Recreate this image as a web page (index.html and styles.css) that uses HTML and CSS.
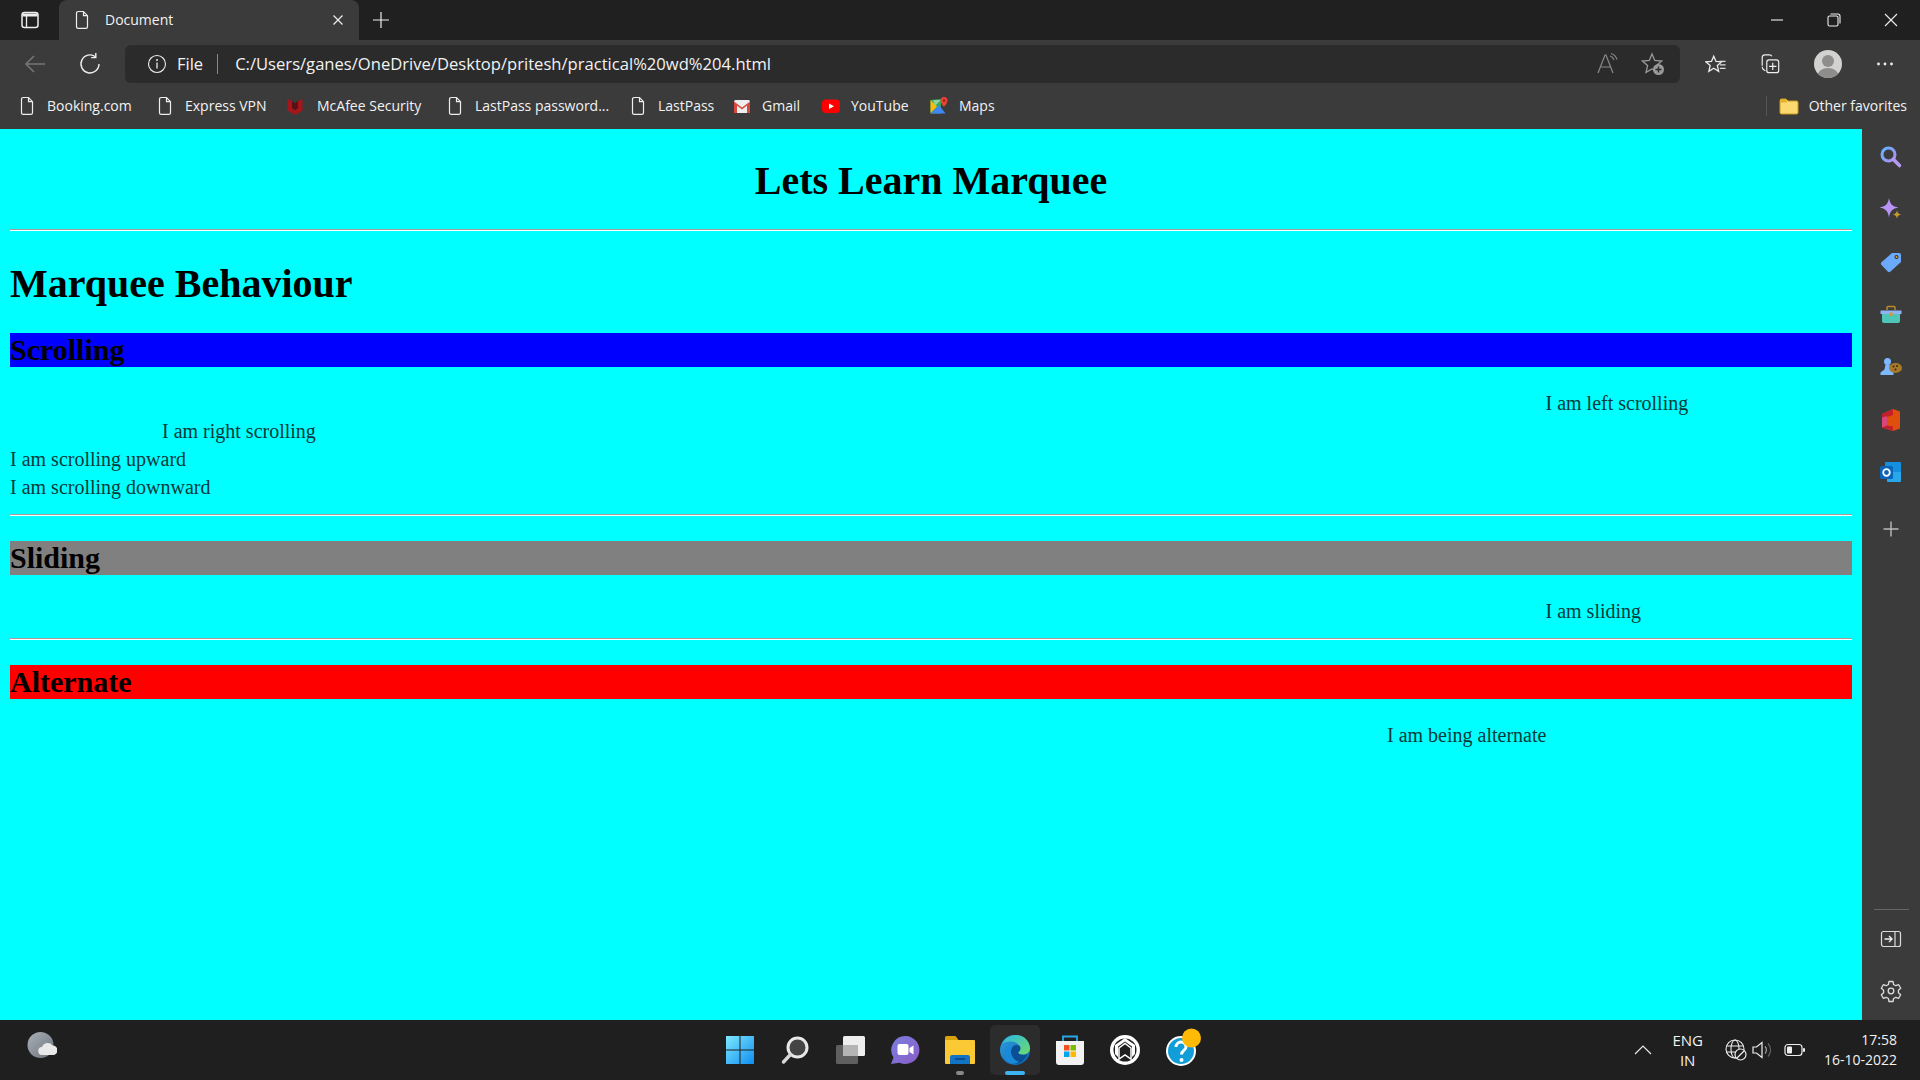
FILE: index.html
```html
<!DOCTYPE html>
<html lang="en">
<head>
<meta charset="utf-8">
<title>Document</title>
<link rel="stylesheet" href="styles.css">
</head>
<body>
<svg class="defs" width="0" height="0" aria-hidden="true">
  <symbol id="doc" viewBox="0 0 20 20"><path d="M4.500 3.200a1.700 1.700 0 0 1 1.700-1.700h5.300l4 4.200v11a1.700 1.700 0 0 1-1.700 1.700H6.200a1.700 1.700 0 0 1-1.700-1.700z M11.500 1.500v4.200h4" fill="none" stroke="#eee" stroke-width="1.200"/></symbol>
</svg>
<div class="window">
  <header class="tabstrip">
    <div class="win-menu">
      <svg width="20" height="20" viewBox="0 0 20 20"><rect x="2" y="2.500" width="16" height="15" rx="2.500" fill="none" stroke="#eee" stroke-width="1.500"/><path d="M2.500 3.500h15v3h-15z" fill="#eee"/><path d="M6.500 6v11" stroke="#eee" stroke-width="1.300"/></svg>
    </div>
    <div class="tab">
      <svg class="ico20" width="20" height="20"><use href="#doc"/></svg>
      <span class="tab-title">Document</span>
      <svg class="tab-close" width="12" height="12" viewBox="0 0 12 12"><path d="M1.500 1.500l9 9M10.500 1.500l-9 9" stroke="#eee" stroke-width="1.200"/></svg>
    </div>
    <div class="newtab">
      <svg width="18" height="18" viewBox="0 0 18 18"><path d="M9 1v16M1 9h16" stroke="#eee" stroke-width="1.200"/></svg>
    </div>
    <div class="spacer"></div>
    <div class="winbtn"><svg width="14" height="14" viewBox="0 0 14 14"><path d="M1 7h12" stroke="#eee" stroke-width="1.100"/></svg></div>
    <div class="winbtn"><svg width="14" height="14" viewBox="0 0 14 14"><rect x="1" y="3" width="10" height="10" rx="1.500" fill="none" stroke="#eee" stroke-width="1.100"/><path d="M3.500 1h7.300a2.200 2.200 0 0 1 2.200 2.200v7.300" fill="none" stroke="#eee" stroke-width="1.100"/></svg></div>
    <div class="winbtn"><svg width="14" height="14" viewBox="0 0 14 14"><path d="M1 1l12 12M13 1L1 13" stroke="#eee" stroke-width="1.100"/></svg></div>
  </header>

  <nav class="toolbar">
    <div class="navbtn">
      <svg width="24" height="24" viewBox="0 0 24 24"><path d="M22 12H3M11 4l-8 8 8 8" fill="none" stroke="#777" stroke-width="1.500"/></svg>
    </div>
    <div class="navbtn">
      <svg width="24" height="24" viewBox="0 0 24 24"><path d="M17.500 4.800A9 9 0 1 0 21 12" fill="none" stroke="#eee" stroke-width="1.400"/><path d="M17.800 1v4.600h-4.600" fill="none" stroke="#eee" stroke-width="1.400"/></svg>
    </div>
    <div class="address">
      <svg class="info" width="20" height="20" viewBox="0 0 20 20"><circle cx="10" cy="10" r="8.500" fill="none" stroke="#eee" stroke-width="1.100"/><path d="M10 8.500v6" stroke="#eee" stroke-width="1.300"/><circle cx="10" cy="6" r="1" fill="#eee"/></svg>
      <span class="addr-file">File</span>
      <span class="addr-sep"></span>
      <span class="addr-url">C:/Users/ganes/OneDrive/Desktop/pritesh/practical%20wd%204.html</span>
      <div class="spacer"></div>
      <svg class="addr-ico" width="24" height="24" viewBox="0 0 24 24"><path d="M2 21L9 3h1l7 18M5 15h10" fill="none" stroke="#8a8a8a" stroke-width="1.200"/><path d="M14 4a6 6 0 0 1 4 4M15 1.500a9 9 0 0 1 6 6" fill="none" stroke="#8a8a8a" stroke-width="1.100"/></svg>
      <svg class="addr-ico addr-fav" width="24" height="24" viewBox="0 0 24 24"><path d="M11 2l2.800 6.400 7 .6-5.300 4.600 1.500 6.800L11 17l-6 3.400 1.600-6.800L1.300 9l7-.6z" fill="none" stroke="#9a9a9a" stroke-width="1.300"/><circle cx="17.500" cy="17.500" r="5.500" fill="#9a9a9a"/><path d="M17.500 14.500v6M14.500 17.500h6" stroke="#2b2b2b" stroke-width="1.400"/></svg>
    </div>
    <div class="toolbtn toolbtn-first">
      <svg width="21" height="21" viewBox="0 0 24 24"><path d="M10 2.500l2.600 6 6.400.5-4.900 4.200 1.500 6.500L10 16.200l-5.600 3.500 1.500-6.500L1 9l6.400-.5z" fill="none" stroke="#eee" stroke-width="1.500"/><path d="M16.500 8.500h7M17 12.500h6.500M17 16.500h6.500" stroke="#ddd" stroke-width="1.300"/></svg>
    </div>
    <div class="toolbtn toolbtn-coll">
      <svg width="22" height="22" viewBox="0 0 24 24"><path d="M3.500 14V5a3 3 0 0 1 3-3h5a3 3 0 0 1 2.600 1.500M7 19.500l-1.500-1A4 4 0 0 1 3.500 15" fill="none" stroke="#eee" stroke-width="1.300"/><rect x="8.500" y="7.500" width="13" height="14" rx="2.500" fill="#3b3b3b" stroke="#eee" stroke-width="1.300"/><path d="M15 10.500v8M11 14.500h8" stroke="#eee" stroke-width="1.300"/></svg>
    </div>
    <div class="toolbtn">
      <svg width="28" height="28" viewBox="0 0 28 28"><defs><clipPath id="av"><circle cx="14" cy="14" r="14"/></clipPath></defs><circle cx="14" cy="14" r="14" fill="#d2d2d0"/><g clip-path="url(#av)" fill="#8f8d8b"><circle cx="14" cy="11" r="6"/><ellipse cx="14" cy="26" rx="10.500" ry="8"/></g></svg>
    </div>
    <div class="toolbtn">
      <svg width="18" height="6" viewBox="0 0 18 6"><circle cx="2.500" cy="3" r="1.400" fill="#eee"/><circle cx="9" cy="3" r="1.400" fill="#eee"/><circle cx="15.500" cy="3" r="1.400" fill="#eee"/></svg>
    </div>
  </nav>

  <div class="bookmarks">
    <a class="bm w138"><svg class="ico20" width="20" height="20"><use href="#doc"/></svg><span>Booking.com</span></a>
    <a class="bm w130"><svg class="ico20" width="20" height="20"><use href="#doc"/></svg><span>Express VPN</span></a>
    <a class="bm bm-wide w160"><svg class="ico20" width="20" height="20" viewBox="0 0 20 20"><path d="M2.500 3l4.500 2v7l3 2 3-2V5l4.500-2v11.500L10 19l-7.500-4.500z" fill="#a4161c"/><path d="M7 5l3 2.500L13 5v7l-3 2-3-2z" fill="#5a1014"/></svg><span>McAfee Security</span></a>
    <a class="bm w183"><svg class="ico20" width="20" height="20"><use href="#doc"/></svg><span>LastPass password...</span></a>
    <a class="bm w104"><svg class="ico20" width="20" height="20"><use href="#doc"/></svg><span>LastPass</span></a>
    <a class="bm w89"><svg class="ico20" width="20" height="20" viewBox="0 0 20 20"><rect x="2" y="4" width="16" height="13" rx="1.500" fill="#eee"/><path d="M2 5.500L10 11.500 18 5.500V6.500 17h-3V9.500L10 13.500 5 9.500V17H2z" fill="#d9483b"/></svg><span>Gmail</span></a>
    <a class="bm w108"><svg class="ico20" width="20" height="20" viewBox="0 0 20 20"><rect x="1" y="3.500" width="18" height="13.500" rx="4" fill="#f00"/><path d="M8 7.500l5 2.800-5 2.800z" fill="#fff"/></svg><span>YouTube</span></a>
    <a class="bm"><svg class="ico20" width="20" height="20" viewBox="0 0 20 20"><path d="M1.500 4L12 3v14.500H1.500z" fill="#34a853"/><path d="M1.500 17.500L10 9l6.500 8.500z" fill="#4285f4"/><path d="M1.500 4L8 10.500 1.500 17z" fill="#fbbc04"/><path d="M4 4h8L6 10z" fill="#8fd0a0"/><path d="M15 1a3.500 3.500 0 0 1 3.500 3.500C18.500 7 15 11 15 11s-3.500-4-3.500-6.500A3.500 3.500 0 0 1 15 1z" fill="#ea4335"/><circle cx="15" cy="4.500" r="1.200" fill="#8a1f16"/></svg><span>Maps</span></a>
    <div class="spacer"></div>
    <span class="bm-sep"></span>
    <a class="bm bm-other"><svg class="ico20" width="20" height="20" viewBox="0 0 20 20"><path d="M1 4.500a1.500 1.500 0 0 1 1.500-1.500h4.500l2 2h8.500a1.500 1.500 0 0 1 1.500 1.500v10a1.500 1.500 0 0 1-1.500 1.500h-15A1.500 1.500 0 0 1 1 16.500z" fill="#fbd970" stroke="#c99a1d" stroke-width="1"/><path d="M1 6.500h7L7 3H2.500A1.500 1.500 0 0 0 1 4.500z" fill="#e5b22c"/></svg><span>Other favorites</span></a>
  </div>

  <div class="main">
    <main class="page">
      <h1 class="title">Lets Learn Marquee</h1>
      <hr class="rule">
      <h1 class="heading">Marquee Behaviour</h1>
      <h2 class="band band-blue">Scrolling</h2>
      <div class="row row-first"><span class="off-left">I am left scrolling</span></div>
      <div class="row"><span class="off-right">I am right scrolling</span></div>
      <div class="row">I am scrolling upward</div>
      <div class="row">I am scrolling downward</div>
      <hr class="rule rule-after">
      <h2 class="band band-gray">Sliding</h2>
      <div class="row row-first"><span class="off-left">I am sliding</span></div>
      <hr class="rule rule-after">
      <h2 class="band band-red">Alternate</h2>
      <div class="row row-first"><span class="off-alt">I am being alternate</span></div>
    </main>
    <aside class="sidebar">
      <svg class="side" width="24" height="24" viewBox="0 0 24 24"><defs><linearGradient id="gs" x1="0" y1="0" x2="1" y2="1"><stop offset="0" stop-color="#62b4ff"/><stop offset="1" stop-color="#b08cf0"/></linearGradient></defs><circle cx="9.500" cy="9.500" r="6.500" fill="none" stroke="url(#gs)" stroke-width="3"/><path d="M14.500 14.500L20.500 20.500" stroke="#b49af0" stroke-width="3.600" stroke-linecap="round"/></svg>
      <svg class="side" width="24" height="24" viewBox="0 0 24 24"><path d="M10 0c1 6 3.500 8.500 9.500 9.500C13.500 10.500 11 13 10 19.500 9 13 6.500 10.500.5 9.500 6.500 8.500 9 6 10 0z" fill="#b794f6"/><path d="M18 12c.4 3 1.200 3.800 4.500 4.500-3.300.7-4.100 1.500-4.500 4.500-.4-3-1.200-3.800-4.500-4.500 3.300-.7 4.100-1.500 4.500-4.500z" fill="#c9982b"/></svg>
      <svg class="side" width="24" height="24" viewBox="0 0 24 24"><path d="M13 3h7a2 2 0 0 1 2 2v7L11.500 21.500a2 2 0 0 1-2.800 0L2.500 15a2 2 0 0 1 0-2.800z" fill="#6aa9fb"/><circle cx="17.500" cy="7" r="2" fill="#3a2f12"/><circle cx="17.500" cy="7" r="1" fill="#e0a82e"/></svg>
      <svg class="side" width="24" height="24" viewBox="0 0 24 24"><path d="M8 7V4.500A1 1 0 0 1 9 3.500h6a1 1 0 0 1 1 1V7" fill="none" stroke="#b8892b" stroke-width="1.500"/><path d="M3 10h18v8a2 2 0 0 1-2 2H5a2 2 0 0 1-2-2z" fill="#4fc7b8"/><path d="M1.500 7.500h21V11h-21z" fill="#8fb4f5"/><rect x="10.500" y="9.500" width="3" height="3.500" fill="#d8982b"/></svg>
      <svg class="side" width="24" height="24" viewBox="0 0 24 24"><circle cx="8.500" cy="6.500" r="3.500" fill="#7cb9ff"/><path d="M6.500 9.500h4l1 5 3 3v2.500H1.500v-2.500l4-3z" fill="#7cb9ff"/><ellipse cx="16.500" cy="13" rx="6.500" ry="5" fill="#a8792a"/><circle cx="14.500" cy="11.500" r="1" fill="#3a2a10"/><circle cx="18" cy="11" r="1" fill="#3a2a10"/><circle cx="16.500" cy="14.500" r="1" fill="#3a2a10"/></svg>
      <svg class="side" width="24" height="24" viewBox="0 0 24 24"><path d="M14 1l7 2.500v17L14 23 3 19.500V6z" fill="#e04e0e"/><path d="M14 1v6l-6 2v8.500l6 1V23L3 19.500V6z" fill="#c4202c"/><path d="M3 9.500L8 8v9.500l-5 2z" fill="#d9467a"/></svg>
      <svg class="side" width="24" height="24" viewBox="0 0 24 24"><rect x="6" y="2" width="16" height="11" rx="1" fill="#1490df"/><path d="M8 12h14v9a1 1 0 0 1-1 1H9a1 1 0 0 1-1-1z" fill="#28a8ea"/><rect x="1" y="6" width="13" height="13" rx="1.500" fill="#0a64b8"/><circle cx="7.500" cy="12.500" r="3.300" fill="none" stroke="#fff" stroke-width="1.800"/></svg>
      <svg class="side side-plus" width="24" height="24" viewBox="0 0 24 24"><path d="M12 4.500v15M4.500 12h15" stroke="#bbb" stroke-width="1.400"/></svg>
      <div class="spacer"></div>
      <span class="side-sep"></span>
      <svg class="side side-dock" width="24" height="24" viewBox="0 0 24 24"><rect x="2.500" y="4.500" width="19" height="15" rx="2" fill="none" stroke="#ddd" stroke-width="1.200"/><path d="M16 4.500v15" stroke="#ddd" stroke-width="1.200"/><path d="M5.500 12H13M10 9l3 3-3 3" fill="none" stroke="#eee" stroke-width="1.400"/></svg>
      <svg class="side side-gear" width="24" height="24" viewBox="0 0 24 24"><path d="M10 2.500h4l.6 3 2.200 1.200 2.900-1 2 3.500-2.300 2 0 2.600 2.300 2-2 3.500-2.900-1-2.200 1.200-.6 3h-4l-.6-3-2.200-1.200-2.900 1-2-3.500 2.300-2 0-2.600-2.300-2 2-3.500 2.900 1 2.200-1.200z" fill="none" stroke="#ddd" stroke-width="1.300" stroke-linejoin="round"/><circle cx="12" cy="12" r="2.800" fill="none" stroke="#ddd" stroke-width="1.300"/></svg>
    </aside>
  </div>

  <footer class="taskbar">
    <div class="tb-left">
      <svg width="30" height="26" viewBox="0 0 30 26"><defs><linearGradient id="moon" x1="0" y1="0" x2="1" y2="1"><stop offset="0" stop-color="#a9b0b8"/><stop offset="1" stop-color="#6e747b"/></linearGradient></defs><circle cx="13.500" cy="13" r="13" fill="url(#moon)"/><path d="M15.500 23a4 4 0 0 1-.5-8 6 6 0 0 1 10.500-1.500 4.500 4.500 0 0 1 .5 9.500z" fill="#e9e9e9"/></svg>
    </div>
    <div class="tb-center">
      <div class="tb-item"><svg width="30" height="30" viewBox="0 0 30 30"><defs><linearGradient id="w11" x1="0" y1="0" x2="1" y2="1"><stop offset="0" stop-color="#7fe8ff"/><stop offset="1" stop-color="#0f8ef0"/></linearGradient></defs><path d="M1 1h13.500v13.500H1zM15.500 1H29v13.500H15.500zM1 15.500h13.500V29H1zM15.500 15.500H29V29H15.500z" fill="url(#w11)"/></svg></div>
      <div class="tb-item"><svg width="30" height="30" viewBox="0 0 30 30"><circle cx="17.500" cy="12.500" r="9.500" fill="#444" stroke="#e8e8e8" stroke-width="3"/><path d="M10.500 19.500L3.500 27" stroke="#d8d8d8" stroke-width="3.400" stroke-linecap="round"/></svg></div>
      <div class="tb-item"><svg width="30" height="30" viewBox="0 0 30 30"><rect x="1" y="10" width="22" height="19" rx="1.500" fill="#5f5f5f"/><rect x="8" y="1" width="22" height="20" rx="1.500" fill="#eee"/><rect x="8" y="10" width="15" height="11" fill="#b4b4b4"/></svg></div>
      <div class="tb-item"><svg width="30" height="30" viewBox="0 0 30 30"><defs><linearGradient id="teams" x1="0" y1="0" x2="1" y2="1"><stop offset="0" stop-color="#7b7fe0"/><stop offset="1" stop-color="#8a5cc6"/></linearGradient></defs><path d="M15.500 1a14 14 0 1 1-6 26.700L1 29l2.500-6.500A14 14 0 0 1 15.500 1z" fill="url(#teams)"/><rect x="7.500" y="9" width="11" height="11" rx="2" fill="#fff"/><path d="M19.500 13l4-2.500v9l-4-2.500z" fill="#fff"/></svg></div>
      <div class="tb-item"><svg width="32" height="30" viewBox="0 0 32 30"><path d="M1 2.500A1.500 1.500 0 0 1 2.500 1h9l3 4H1z" fill="#d9a20c"/><path d="M1 5h29a1 1 0 0 1 1 1v22a1 1 0 0 1-1 1H2a1 1 0 0 1-1-1z" fill="#fbc934"/><path d="M6 22a2 2 0 0 1 2-2h16a2 2 0 0 1 2 2v7H6z" fill="#1273c4"/><path d="M11 24h10" stroke="#0a3f78" stroke-width="1.500"/></svg><span class="tb-dot"></span></div>
      <div class="tb-item tb-active"><svg width="32" height="32" viewBox="0 0 32 32"><defs><linearGradient id="e1" x1="0" y1="0" x2="1" y2="1"><stop offset="0" stop-color="#2f9fe0"/><stop offset="1" stop-color="#0b62b0"/></linearGradient><linearGradient id="e2" x1="0" y1="0" x2="1" y2="1"><stop offset="0" stop-color="#2ab6e8"/><stop offset="1" stop-color="#6fdc6a"/></linearGradient></defs><circle cx="16" cy="16" r="15" fill="url(#e1)"/><path d="M3 10C6 3 12 1 17 1c8 0 14 6 14 13.500 0 3.500-3 6-7 6-3 0-5-1-5-2 1-1 2-2 2-4 0-4-4-7-9-7-4 0-8 1-9 2.500z" fill="url(#e2)"/><path d="M12 17c0-4 3-6 6-6 2.500 0 3.500 1.500 3.500 3.500 0 2-1.500 3-2.500 4 1 2.500 5 3 9 2-2 6-7 9.500-12 9.500-3 0-6-1-8-3 2 0 4-4 4-10z" fill="#0a4f95"/><path d="M12 17c0 5 3 9 8 11-3 2-7 2.500-9.500 1C7 27 5 23 6 18c1-4 4-6 8-6-1 1-2 3-2 5z" fill="#1a8ad8"/></svg><span class="tb-bar"></span></div>
      <div class="tb-item"><svg width="30" height="32" viewBox="0 0 30 32"><path d="M8 7V2.500h14V7" fill="none" stroke="#29a8e8" stroke-width="1.800"/><path d="M1 7h28v21a3 3 0 0 1-3 3H4a3 3 0 0 1-3-3z" fill="#f2f2f2"/><rect x="9" y="11" width="5.500" height="5.500" fill="#f25022"/><rect x="15.500" y="11" width="5.500" height="5.500" fill="#7fba00"/><rect x="9" y="17.500" width="5.500" height="5.500" fill="#00a4ef"/><rect x="15.500" y="17.500" width="5.500" height="5.500" fill="#ffb900"/></svg></div>
      <div class="tb-item"><svg width="30" height="30" viewBox="0 0 30 30"><circle cx="15" cy="15" r="15" fill="#fff"/><circle cx="15" cy="15" r="11.500" fill="#1f1f1f"/><path d="M15 3L25 10v9l-3 3V11.500L15 6.500l-7 5V22l-3-3v-9z" fill="#fff"/><path d="M9 13l6-4.500 6 4.500v11l-6-4-6 4z" fill="#1f1f1f" stroke="#fff" stroke-width="1.500"/></svg></div>
      <div class="tb-item"><svg class="help" width="42" height="38" viewBox="0 0 42 38"><circle cx="22" cy="23" r="15" fill="#fff"/><circle cx="22" cy="23" r="13" fill="#119ed8"/><path d="M17 19a5 5 0 0 1 10 0c0 3.500-4.500 3.500-4.500 7.500" fill="none" stroke="#fff" stroke-width="3"/><circle cx="22.500" cy="32" r="2" fill="#fff"/><circle cx="32.500" cy="10" r="9.500" fill="#ffba08"/></svg></div>
    </div>
    <div class="tb-right">
      <svg class="tray-chev" width="20" height="12" viewBox="0 0 20 12"><path d="M2 10l8-8 8 8" fill="none" stroke="#e8e8e8" stroke-width="1.200"/></svg>
      <div class="tray-lang"><span>ENG</span><span>IN</span></div>
      <svg class="tray-globe" width="22" height="22" viewBox="0 0 22 22"><circle cx="10" cy="10" r="9" fill="none" stroke="#eee" stroke-width="1.100"/><ellipse cx="10" cy="10" rx="4" ry="9" fill="none" stroke="#eee" stroke-width="1.100"/><path d="M1.500 7h17M1.500 13h17" stroke="#eee" stroke-width="1.100"/><circle cx="15.500" cy="15.500" r="5.500" fill="#1f1f1f" stroke="#eee" stroke-width="1.200"/><path d="M12 19l7-7" stroke="#eee" stroke-width="1.200"/></svg>
      <svg class="tray-vol" width="22" height="20" viewBox="0 0 22 20"><path d="M1 7h3.500L10 2.500v15L4.500 13H1z" fill="none" stroke="#eee" stroke-width="1.200"/><path d="M13 6.500a5 5 0 0 1 0 7" fill="none" stroke="#aaa" stroke-width="1.100"/><path d="M16 3.500a9.500 9.500 0 0 1 0 13" fill="none" stroke="#666" stroke-width="1.100"/></svg>
      <svg class="tray-bat" width="22" height="14" viewBox="0 0 22 14"><rect x="1" y="1.500" width="17" height="11" rx="3" fill="none" stroke="#eee" stroke-width="1.200"/><rect x="3" y="3.500" width="5" height="7" rx="1" fill="#eee"/><rect x="19" y="5" width="2" height="4" rx="1" fill="#eee"/></svg>
      <div class="tray-clock"><span>17:58</span><span>16-10-2022</span></div>
    </div>
  </footer>
</div>
</body>
</html>
```
FILE: styles.css
```css
* { box-sizing: border-box; }
html, body { margin: 0; padding: 0; height: 100%; overflow: hidden; }
body { font-family: "Open Sans", "Noto Sans", sans-serif; color: #f2f2f2; background: #202020; }
.defs { position: absolute; }
svg { display: block; flex: none; }
.spacer { flex: 1; }
.window { width: 1920px; height: 1080px; display: flex; flex-direction: column; }

.tabstrip { height: 40px; background: #202020; display: flex; align-items: center; }
.win-menu { width: 59px; display: flex; justify-content: center; }
.tab { width: 300px; height: 40px; background: #3b3b3b; border-radius: 8px 8px 0 0; display: flex; align-items: center; padding: 0 15px 0 13px; }
.tab-title { margin: 0 0 2px 13px; font-size: 14px; flex: 1; }
.newtab { width: 44px; display: flex; justify-content: center; }
.winbtn { width: 57px; display: flex; justify-content: center; }
.winbtn:last-child { width: 58px; }

.toolbar { height: 44px; background: #3b3b3b; display: flex; align-items: center; padding: 5px 7px 1px 7px; }
.navbtn { width: 55px; display: flex; justify-content: center; }
.address { width: 1555px; margin-left: 8px; height: 38px; background: #2b2b2b; border-radius: 6px; display: flex; align-items: center; padding: 0 15px 0 22px; }
.addr-file { margin: 0 0 2px 10px; font-size: 16.5px; }
.addr-sep { width: 1px; height: 20px; background: #888; margin: 0 17px 0 14px; }
.addr-url { font-size: 16.6px; margin-bottom: 2px; }
.addr-fav { margin-left: 21px; }
.toolbtn { width: 56.500px; display: flex; justify-content: center; }
.toolbtn-first { margin-left: 7px; }
.toolbtn-coll { margin-left: -2px; margin-right: 2px; }

.bookmarks { height: 45px; background: #3b3b3b; display: flex; align-items: center; padding: 0 13px 2px 17px; font-size: 14px; }
.bm { display: flex; align-items: center; gap: 10px; }
.bm-wide { gap: 12px; }
.w138 { width: 138px; }
.w130 { width: 130px; }
.w160 { width: 160px; }
.w183 { width: 183px; }
.w104 { width: 104px; }
.w89 { width: 89px; }
.w108 { width: 108px; }
.bm-sep { width: 1px; height: 20px; background: #555; margin-right: 12px; }

.main { height: 891px; display: flex; }
.page { width: 1862px; background: #0ff; padding: 0 10px; color: #000; font-family: "Liberation Serif", serif; font-size: 20px; }
.title { margin: 29px 0 25px; font-size: 40px; line-height: 46px; text-align: center; }
.heading { margin: 30px 0 26px; font-size: 40px; line-height: 46px; }
.rule { margin: 0; height: 2px; border: 0; background: #a89a9a; border-bottom: 1px solid #fff; }
.rule-after { margin: 10px 0 25px; }
.band { margin: 0; height: 34px; font-size: 30px; line-height: 34px; }
.band-blue { background: #00f; }
.band-gray { background: #808080; }
.band-red { background: #f00; }
.row { height: 28px; line-height: 23px; color: #063a3a; }
.row-first { margin-top: 25px; }
.off-left { margin-left: 1535.500px; }
.off-right { margin-left: 152px; }
.off-alt { margin-left: 1377px; }

.sidebar { width: 58px; background: #3b3b3b; display: flex; flex-direction: column; align-items: center; padding: 16px 0 17px; gap: 28.500px; }
.side-plus { margin-top: 4px; }
.side-sep { width: 35px; height: 1px; background: #666; margin: 2px 0 -12px; }

.taskbar { height: 60px; background: #1f1f1f; display: grid; grid-template-columns: 1fr auto 1fr; align-items: center; }
.tb-left { padding-left: 27px; margin-top: -10px; }
.tb-center { display: flex; gap: 5.100px; }
.tb-item { width: 50px; height: 50px; display: flex; align-items: center; justify-content: center; position: relative; border-radius: 5px; }
.tb-active { background: #2c2c2c; }
.tb-dot { position: absolute; left: 21px; bottom: 0; width: 8px; height: 4px; border-radius: 2px; background: #888; }
.tb-bar { position: absolute; left: 15px; bottom: 0; width: 20px; height: 4px; border-radius: 2px; background: #3db4f2; }
.help { margin-top: -6px; }
.tb-right { display: flex; align-items: center; justify-content: flex-end; padding-right: 23px; font-size: 14px; }
.tray-lang, .tray-clock { display: flex; flex-direction: column; line-height: 20px; }
.tray-lang { align-items: center; margin-left: 19px; font-size: 15px; }
.tray-globe { margin-left: 22.500px; }
.tray-vol { margin-left: 5px; }
.tray-bat { margin-left: 9.500px; }
.tray-clock { align-items: flex-end; margin-left: 18px; }
```
